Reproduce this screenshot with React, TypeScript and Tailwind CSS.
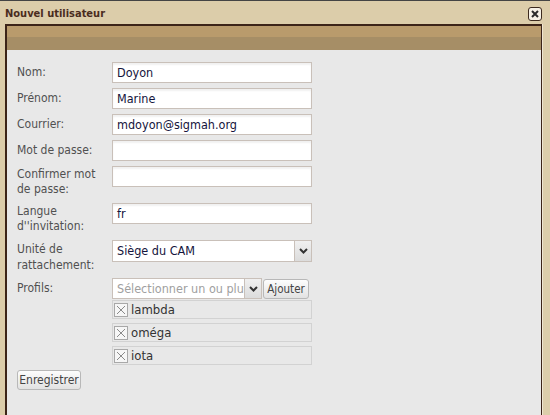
import React from "react";

const font = { fontFamily: '"DejaVu Sans Condensed", "DejaVu Sans", Tahoma, sans-serif' };

function Chevron() {
  return (
    <svg width="9" height="6" viewBox="0 0 9 6">
      <path d="M1 1 L4.5 4.5 L8 1" stroke="#333" strokeWidth="2" fill="none" />
    </svg>
  );
}

function Input({ value }: { value?: string }) {
  return (
    <div className="w-[200px] h-[21px] bg-white border border-[#c9c0b9] shadow-[inset_0_2px_2px_rgba(0,0,0,0.06)] pl-[4px] text-[12.5px] leading-[19px] text-[#14143c]">
      {value}
    </div>
  );
}

function Label({ children, pt = "pt-[3px]", lh = "leading-[15px]" }: { children: React.ReactNode; pt?: string; lh?: string }) {
  return <div className={`w-[95px] shrink-0 text-[12px] text-[#505050] ${pt} ${lh}`}>{children}</div>;
}

function Item({ text }: { text: string }) {
  return (
    <div className="w-[200px] h-[19px] border border-[#d2d2d2] flex items-center">
      <div className="w-[14px] h-[14px] ml-[1px] border border-[#a8a8a8] bg-[#f6f6f6] flex items-center justify-center">
        <svg width="10" height="10" viewBox="0 0 10 10">
          <path d="M1 1 L9 9 M9 1 L1 9" stroke="#8a8a8a" strokeWidth="1" />
        </svg>
      </div>
      <span className="ml-[3px] text-[13px] leading-[17px] text-[#333]">{text}</span>
    </div>
  );
}

export default function App() {
  return (
    <div className="w-[550px] h-[415px] bg-[#dccdaa] border-t border-[#444] flex flex-col overflow-hidden" style={font}>
      <div className="h-[23px] flex items-center justify-between pl-[5px] pr-[8px] shrink-0">
        <span className="text-[11px] font-bold text-[#4a2c1e] pt-[3px]">Nouvel utilisateur</span>
        <div className="w-[14px] h-[14px] mt-[3px] rounded-[3px] border border-[#3c2a1e] bg-[#f6f1e6] flex items-center justify-center">
          <svg width="8" height="8" viewBox="0 0 8 8">
            <path d="M1 1 L7 7 M7 1 L1 7" stroke="#2a2a2a" strokeWidth="2" />
          </svg>
        </div>
      </div>
      <div className="ml-[5px] w-[537px] flex-1 border-l-2 border-t-2 border-r border-[#3c2418] shadow-[1px_0_0_#efe6d2] bg-[#e8e8e8] flex flex-col">
        <div className="h-[11px] bg-[#b99b6c] shrink-0" />
        <div className="h-[13px] bg-[#a68e66] shrink-0" />
        <div className="pl-[10px] pt-[12px] flex flex-col">
          <div className="flex">
            <Label>Nom:</Label>
            <Input value="Doyon" />
          </div>
          <div className="flex mt-[5px]">
            <Label>Prénom:</Label>
            <Input value="Marine" />
          </div>
          <div className="flex mt-[5px]">
            <Label>Courrier:</Label>
            <Input value="mdoyon@sigmah.org" />
          </div>
          <div className="flex mt-[5px]">
            <Label>Mot de passe:</Label>
            <Input />
          </div>
          <div className="flex mt-[5px]">
            <Label pt="pt-[1px]">Confirmer mot de passe:</Label>
            <Input />
          </div>
          <div className="flex mt-[6px]">
            <Label pt="pt-[1px]">Langue d''invitation:</Label>
            <Input value="fr" />
          </div>
          <div className="flex mt-[6px]">
            <Label pt="pt-[1px]" lh="leading-[16px]">Unité de rattachement:</Label>
            <div className="w-[200px] h-[22px] bg-white border border-[#c9c0b9] flex">
              <div className="flex-1 pl-[4px] text-[12.5px] leading-[20px] text-[#14143c]">Siège du CAM</div>
              <div className="w-[17px] h-full border-l border-[#c9c0b9] bg-gradient-to-b from-[#f0f0f0] to-[#dcdcdc] flex items-center justify-center">
                <Chevron />
              </div>
            </div>
          </div>
          <div className="flex mt-[5px]">
            <Label>Profils:</Label>
            <div className="flex flex-col">
              <div className="flex h-[21px]">
                <div className="w-[133px] h-[21px] bg-white border border-[#c9c0b9] flex overflow-hidden">
                  <div className="pl-[4px] text-[12.5px] leading-[19px] text-[#a0a0a0] whitespace-nowrap overflow-hidden">Sélectionner un ou plu</div>
                </div>
                <div className="w-[17px] h-[21px] border border-l-0 border-[#c9c0b9] bg-gradient-to-b from-[#f0f0f0] to-[#dcdcdc] flex items-center justify-center">
                  <Chevron />
                </div>
                <div className="ml-[1px] w-[46px] h-[20px] mt-[1px] rounded-[3px] border border-[#b8b8b8] bg-gradient-to-b from-[#fdfdfd] to-[#e2e2e2] text-[11.5px] leading-[18px] text-[#444] text-center">
                  Ajouter
                </div>
              </div>
              <div className="mt-[1px] flex flex-col gap-[4px]">
                <Item text="lambda" />
                <Item text="oméga" />
                <Item text="iota" />
              </div>
            </div>
          </div>
          <div className="mt-[5px]">
            <div className="w-[64px] h-[20px] rounded-[3px] border border-[#b8b8b8] bg-gradient-to-b from-[#fdfdfd] to-[#e2e2e2] text-[12px] leading-[18px] text-[#444] text-center">
              Enregistrer
            </div>
          </div>
        </div>
      </div>
    </div>
  );
}
